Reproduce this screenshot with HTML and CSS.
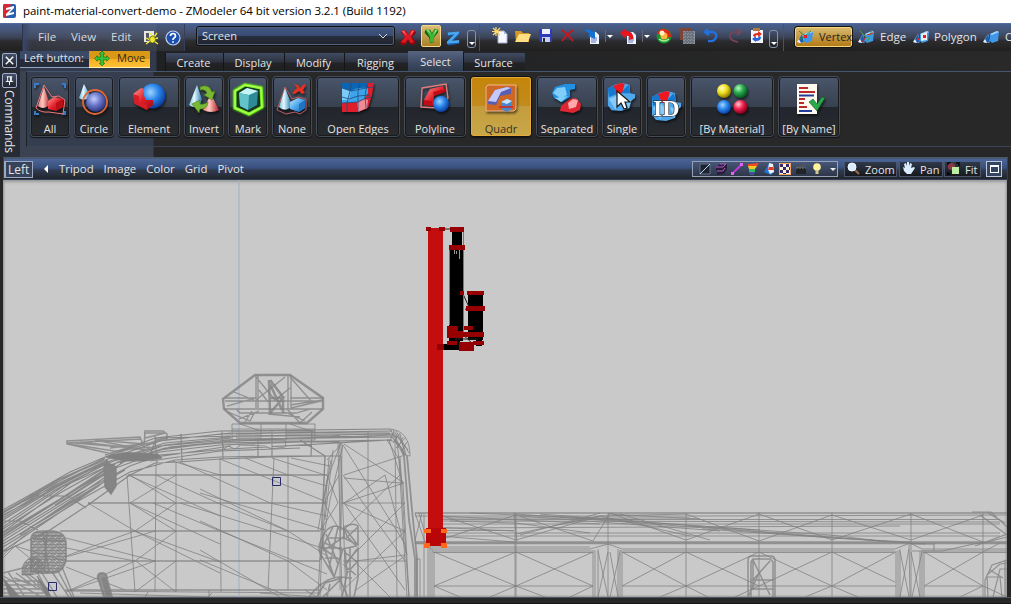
FILE: index.html
```html
<!DOCTYPE html>
<html lang="en">
<head>
<meta charset="utf-8">
<title>paint-material-convert-demo - ZModeler</title>
<link rel="stylesheet" href="styles.css">
</head>
<body>
<svg class="defs" width="0" height="0">
  <defs>
    <linearGradient id="red" x1="0" y1="0" x2="1" y2="1"><stop offset="0" stop-color="#ff9a94"/><stop offset=".5" stop-color="#e3202a"/><stop offset="1" stop-color="#9c0c14"/></linearGradient>
    <linearGradient id="blue" x1="0" y1="0" x2="1" y2="1"><stop offset="0" stop-color="#c4ebff"/><stop offset=".5" stop-color="#4ba6ea"/><stop offset="1" stop-color="#1462b4"/></linearGradient>
    <linearGradient id="coneb"><stop offset="0" stop-color="#6fb9d8"/><stop offset=".4" stop-color="#e6f8ff"/><stop offset="1" stop-color="#2f7fb0"/></linearGradient>
    <linearGradient id="coner"><stop offset="0" stop-color="#f08080"/><stop offset=".4" stop-color="#ffc8c0"/><stop offset="1" stop-color="#b01820"/></linearGradient>
    <radialGradient id="ballb" cx=".4" cy=".35" r=".65"><stop offset="0" stop-color="#9fd4ff"/><stop offset=".5" stop-color="#2a86ea"/><stop offset="1" stop-color="#0b3c9c"/></radialGradient>
    <radialGradient id="ballv" cx=".4" cy=".35" r=".65"><stop offset="0" stop-color="#c4ccff"/><stop offset=".5" stop-color="#6b78c8"/><stop offset="1" stop-color="#2c3580"/></radialGradient>
    <radialGradient id="bally" cx=".35" cy=".3" r=".7"><stop offset="0" stop-color="#ffffc0"/><stop offset=".5" stop-color="#f0e020"/><stop offset="1" stop-color="#8a7a00"/></radialGradient>
    <radialGradient id="ballg" cx=".35" cy=".3" r=".7"><stop offset="0" stop-color="#b8ffc0"/><stop offset=".5" stop-color="#28a84c"/><stop offset="1" stop-color="#065a20"/></radialGradient>
    <radialGradient id="ballr" cx=".35" cy=".3" r=".7"><stop offset="0" stop-color="#ffc8d0"/><stop offset=".5" stop-color="#f0204c"/><stop offset="1" stop-color="#800018"/></radialGradient>
    <pattern id="mesh" width="7" height="6" patternUnits="userSpaceOnUse"><path d="M0 0L7 6M7 0L0 6M0 1.500H7M0 4.500H7M2 0V6M5 0V6M0 3L4 6M3 0L7 3" stroke="#808080" stroke-width=".8" fill="none"/></pattern>
    <symbol id="shapes" viewBox="0 0 16 16"><path d="M0 13L5 5l2 8q-3 2-7 0z" fill="#e8f2fa"/><path d="M2 10l3-5 2 8-3 1z" fill="#1d5fae"/><path d="M7 5l7-3 2 1-1 9-6 2-2-2z" fill="#3f97e8"/><path d="M7 5l7-3 2 1-7 3z" fill="#a3d6ff"/></symbol>
    <symbol id="cluster" viewBox="0 0 32 32"><path d="M2 7l7-4 8-2 8 2 1 9 5 1v4l-4 3-2 8-9 3-10-1-4-5z" fill="#4fa9ec"/><path d="M2 7l7-4 2 10-8 3zM15 12l9-9 2 9z" fill="#1679cf"/><path d="M3 18l9-4 4 7-6 8zM20 17l7 3-3 8z" fill="#88cbfa"/><path d="M8 4l8-3 4 1-3 10-5 1z" fill="#f01820"/></symbol>
  </defs>
</svg>

<header class="title">
  <svg class="logo" viewBox="0 0 14 16"><rect x="0" y="1" width="13" height="14" rx="2" fill="#2c5fb2"/><path d="M0 3q0-2 2-2h6L3 15H2q-2 0-2-2z" fill="#d42a34"/><path d="M3 5l8-2v2L6 10l5-1v2l-8 2v-2l5-5-5 1z" fill="#fff"/></svg>
  <span>paint-material-convert-demo - ZModeler 64 bit version 3.2.1 (Build 1192)</span>
</header>

<nav class="toolbar">
  <div class="menu">
    <span class="m-file">File</span><span class="m-view">View</span><span class="m-edit">Edit</span>
    <svg class="i-spider" viewBox="0 0 16 16"><path d="M1 1h10v11H1z" fill="#e8e8e0"/><path d="M3 3h3v8H3z" fill="#53596a"/><path d="M7 3l2 3M14 3l-3 4M3 8l4 2M15 8l-4 1M3 14l4-3M15 14l-4-3M6 7l3 3M10 5v3" stroke="#f4f230" stroke-width="1.300"/><ellipse cx="9.500" cy="9.500" rx="3" ry="3.500" fill="#eee82a" stroke="#3c3c10" stroke-width=".6"/></svg>
    <svg class="i-help" viewBox="0 0 16 16"><circle cx="8" cy="8" r="7" fill="#1c4fb0" stroke="#c4d4f2" stroke-width="1.200"/><path d="M5.500 6q0-2.500 2.500-2.500T10.500 6Q10.500 7 9 8 8 8.500 8 10M8 11.300v1.500" fill="none" stroke="#fff" stroke-width="1.700"/></svg>
  </div>
  <div class="combo"><span>Screen</span><svg viewBox="0 0 10 6"><path d="M1 1l4 4 4-4" fill="none" stroke="#ddd"/></svg></div>
  <svg class="axis-x" viewBox="0 0 16 18"><path d="M1 4l5-1 2 4 3-5 4 1 1 2-4 4 3 4v3l-4 1-3-4-3 4H1l-1-3 5-5z" fill="#8e0710"/><path d="M1 3l4-1 3 5 3-5 4 0-4 7 3 5-3 1-3-4-3 4-4-1 4-5z" fill="#e01822"/><path d="M2 3l2 0 3 5zM12 3h2l-4 5z" fill="#f5787c"/></svg>
  <div class="axis-y"><svg viewBox="0 0 18 20"><path d="M2 5l1-2 5 0 2 4 3-5 4 1v3l-5 6v5l-4 1-1-6-5-5z" fill="#0f6a12"/><path d="M3 3h4l3 5 3-5h4l-5 8v6H8v-6z" fill="#40b838"/><path d="M4 3h2l3 5zM14 3h2l-4 6z" fill="#a5e79a"/></svg></div>
  <svg class="axis-z" viewBox="0 0 16 16"><path d="M2 3l12-2 1 3-8 8 7-1v3L2 16l-1-4 7-7-6 1z" fill="#1858a8"/><path d="M2 2l12-1v2l-8 8 8-1v3L1 14v-2l8-8-7 1z" fill="#49a7ed"/></svg>
  <span class="drop drop-a"></span>
  <div class="files">
    <svg class="f-new" viewBox="0 0 18 18"><path d="M6 4h6l3 3v9H6z" fill="#f5f8ff" stroke="#aac"/><path d="M12 4v3h3z" fill="#9fb5dc"/><path d="M4 0v9M0 4.500h9M1 1l7 7M8 1L1 8" stroke="#ffd868" stroke-width="1.200"/></svg>
    <svg class="f-open" viewBox="0 0 18 18"><path d="M1 4h6l2 2h6v9H2z" fill="#d49626"/><path d="M5 7h12l-3 8H1z" fill="#ffdf82"/></svg>
    <svg class="f-save" viewBox="0 0 16 16"><path d="M1 1h13v13H3l-2-2z" fill="#2e3ab6"/><path d="M4 1h8v5H4z" fill="#eef"/><path d="M4 9h8v5H4z" fill="#c7d0ee"/><path d="M5 10h2v4H5z" fill="#223"/></svg>
    <svg class="f-del" viewBox="0 0 16 16"><path d="M2 2q6 4 11 11M13 2Q6 7 2 13" stroke="#c21820" stroke-width="2" fill="none"/></svg>
    <svg class="f-imp" viewBox="0 0 18 18"><path d="M7 5h6l3 3v9H7z" fill="#eef3ff"/><path d="M8 11h6M8 13h6M8 15h5" stroke="#6179b4"/><path d="M1 3l5-1 4 3 2-2v9L5 9l2-2-3-2z" fill="#1672d2"/></svg>
    <span class="split"></span>
    <svg class="f-exp" viewBox="0 0 18 18"><path d="M7 5h6l3 3v9H7z" fill="#eef3ff"/><path d="M8 11h6M8 13h6M8 15h5" stroke="#6179b4"/><path d="M0 6l6-5v3q8 0 7 8l-4 1q1-5-3-4v3z" fill="#e8161c"/></svg>
    <span class="split"></span>
    <svg class="f-ball" viewBox="0 0 16 16"><circle cx="8" cy="8" r="7.500" fill="#189428"/><path d="M1 6Q3 0 9 1q6 1 6 8-3 1-5-1T1 6z" fill="#e0241c"/><circle cx="8" cy="8" r="3.500" fill="#ffb43c"/><circle cx="6" cy="5" r="2.500" fill="#fff2c8"/><path d="M3 11q5 4 10 0" stroke="#a8f0a0" fill="none" stroke-width="1.500"/></svg>
    <svg class="f-wall" viewBox="0 0 16 16"><path d="M0 0h12v12H0z" fill="#7d4536"/><path d="M3 3h12v13H3z" fill="#8a9099"/><path d="M3 5h12M3 8h12M3 11h12M3 14h12M6 3v13M9 3v13M12 3v13" stroke="#555b66" stroke-dasharray="2 1"/></svg>
    <svg class="f-undo" viewBox="0 0 16 16"><path d="M5 1L2 4l4 3M3 4h6q5 0 4 5t-8 4" fill="none" stroke="#2370de" stroke-width="2.400"/></svg>
    <svg class="f-redo" viewBox="0 0 16 16"><path d="M10 1l4 3-4 3M13 4H7Q2 5 3 9t8 5" fill="none" stroke="#7a4656" stroke-width="1.600"/></svg>
    <svg class="f-ref" viewBox="0 0 14 16"><path d="M1 2h12v13H1z" fill="#f4f5fb"/><path d="M3 0h7v3H3z" fill="#b57940"/><path d="M3 8q0-3 5-3V3l4 3-4 3V7Q5 7 5 9z" fill="#e22a20"/><path d="M11 9q0 4-5 4v1l-4-3 4-3v2q3 0 3-2z" fill="#2563d8"/></svg>
    <span class="drop"></span>
  </div>
  <div class="modes">
    <span class="vertex"><svg viewBox="0 0 16 16"><use href="#shapes"/><path d="M2 2l6 5M8 7l-6 4M8 7l6-5" stroke="#3a8c28"/><path d="M7 6h3v3H7z" fill="#e02020"/></svg>Vertex</span>
    <svg class="s-edge" viewBox="0 0 16 16"><use href="#shapes"/><path d="M2 2l7 7M14 1l-5 13" stroke="#4aa030"/><path d="M9 6l6-2M8 8l-4 5" stroke="#e02020"/></svg><span class="t-edge">Edge</span>
    <svg class="s-poly" viewBox="0 0 16 16"><use href="#shapes"/><path d="M8 5l6-2v8l-6 1z" fill="#e8ebf2"/><path d="M10 6h3v3h-3zM4 9h2v2H4z" fill="#e02020"/></svg><span class="t-poly">Polygon</span>
    <svg class="s-obj" viewBox="0 0 16 16"><use href="#shapes"/></svg><span class="t-obj">Object</span>
  </div>
</nav>

<main class="dock">
  <aside class="side">
    <span class="mini"><svg viewBox="0 0 14 14"><path d="M3 3l8 8M11 3l-8 8" stroke="#fff" stroke-width="1.500"/></svg></span>
    <span class="mini"><svg viewBox="0 0 14 14"><path d="M4 3h6M5 3v5M9 3v5M8 3v5M3 8h8M7 8v4" stroke="#fff" fill="none"/></svg></span>
    <span class="commands">Commands</span>
  </aside>
  <section class="panel">
    <div class="tabs">
      <span class="lb">Left button:</span>
      <span class="move"><svg viewBox="0 0 16 16"><path d="M8 0l3 3H9.500v3.500H13V5l3 3-3 3V9.500H9.500V13H11l-3 3-3-3h1.500V9.500H3V11L0 8l3-3v1.500h3.500V3H5z" fill="#35c43c" stroke="#14721a" stroke-width=".7"/></svg>Move</span>
      <span class="tab t-create">Create</span><span class="tab t-display">Display</span><span class="tab t-modify">Modify</span><span class="tab t-rigging">Rigging</span><span class="tab t-select">Select</span><span class="tab t-surface">Surface</span>
    </div>
    <div class="ribbon">
      <div class="btn w40"><svg viewBox="0 0 32 32"><path d="M1 5V1h4M28 1h3v4M1 28v3h4M28 31h3v-3" fill="none" stroke="#3a7acb" stroke-width="2"/><path d="M10 2L2 25q5 5 13 4l14 2 2-14-6-4-7 1z" fill="none" stroke="#ef7a78"/><path d="M10 4L4 23q5 4 10 0l2-2z" fill="url(#coner)"/><path d="M14 18l6-4 9 2v8l-7 4-8-2z" fill="url(#red)"/><path d="M14 18l8 2 7-4v8l-7 4v-8z" fill="#b80f18"/></svg><span>All</span></div>
      <div class="btn w40"><svg viewBox="0 0 32 32"><path d="M6 1L1 15q3 3 8 1l3-4z" fill="url(#coneb)"/><circle cx="18" cy="19" r="10" fill="url(#ballv)"/><circle cx="17" cy="19" r="12" fill="none" stroke="#e06838" stroke-width="1.800"/></svg><span>Circle</span></div>
      <div class="btn w62"><svg viewBox="0 0 32 32"><circle cx="20" cy="13" r="12.500" fill="url(#ballb)"/><path d="M0 11l8-6 3 1v7l2 4h7v5l-6 5-12-6z" fill="url(#red)"/><path d="M0 11l6 2v6l8 3v5L1 20z" fill="#d51e26"/></svg><span>Element</span></div>
      <div class="btn w40"><svg viewBox="0 0 32 32"><path d="M9 2L1 22q5 4 11 0l2-6z" fill="url(#coneb)"/><path d="M23 11l-8 16q8 4 16 0z" fill="url(#coner)"/><path d="M12 4q9-4 12 5l3-1-3 9-8-5 3-2q-2-4-7-3zM4 21l8-4v4q4 1 8-2-1 8-8 7l-1 4z" fill="#79b832" stroke="#407818" stroke-width=".6"/></svg><span>Invert</span></div>
      <div class="btn w40"><svg class="glow" viewBox="0 0 32 32"><path d="M3 8L13 2l16 3 1 19-13 7-14-6z" fill="#17351f" stroke="#78f51c" stroke-width="3"/><path d="M3 8L13 2l16 3 1 19-13 7-14-6z" fill="none" stroke="#c2ff70"/><path d="M7 10l8-5 11 3-1 14-9 5-8-4z" fill="#2e8a98"/><path d="M7 10l8-5 11 3-9 4z" fill="#c5f4f2"/><path d="M7 10l10 2-1 15-8-4z" fill="#62c3ca"/></svg><span>Mark</span></div>
      <div class="btn w40"><svg viewBox="0 0 32 32"><path d="M9 4L1 27l9 4 9-2 5 2 6-4V16l-8-2-6 2z" fill="none" stroke="#bd5e64"/><path d="M9 5L3 24q5 5 11 1l1-5z" fill="url(#coneb)"/><path d="M14 19l8-4 7 2v8l-6 4-9-3z" fill="url(#blue)"/><path d="M14 19l9 2 6-4v8l-6 4v-8z" fill="#2374c0"/><path d="M18 1l4 1 2 3 4-4 2 1-3 5 2 3-3 1-3-3-4 3-3-1 5-5z" fill="#e7301f"/></svg><span>None</span></div>
      <div class="btn w84"><svg viewBox="0 0 32 32"><path d="M0 0h27l-1 15-5 5H0z" fill="#3da4ea"/><path d="M0 0h27l-1 5q-11-1-17 3L0 5z" fill="#0965b6"/><path d="M26 0h6l-2 12-4 13-10 4H0v-9l15-1 7-3 4-6z" fill="#df1e2c"/><path d="M15 19l8-3 3 1-1 8-9 4zM0 7l8 1-2 8H0z" fill="#f28a91"/><path d="M0 5l9 3-2 9H0z" fill="#7bcaf8"/><path d="M0 5l9 3 15-3 7-1M0 14l7 2 9-3 12-1M0 20l16-1 8-4 5-1M9 0L8 8 5 20v9M18 0l-2 8v21M25 1l-2 12 1 12" fill="none" stroke="#1c4d82" stroke-width=".8"/></svg><span>Open Edges</span></div>
      <div class="btn w62"><svg viewBox="0 0 32 32"><path d="M3 5l24-4 2 14-10 10-17-1z" fill="none" stroke="#e27d7a" stroke-width="1.400"/><path d="M5 17L11 6l13-3 2 5-11 4-1 11-9-1z" fill="url(#red)"/><path d="M5 17l8 1 1 5-9-1zM14 9l12-3v3l-11 4z" fill="#c30b18"/><circle cx="22" cy="21" r="8" fill="url(#ballb)"/></svg><span>Polyline</span></div>
      <div class="btn w62 on"><svg viewBox="0 0 32 32"><path d="M1 4l2-2h28v24l-2 2H1z" fill="#ce6624" stroke="#f3bd91"/><path d="M3 18l7-11 12-3 4 1v6l-11 2-4 9-8-1z" fill="#595eb2"/><path d="M3 18l7-11 12-3 4 1-10 4-5 10z" fill="#c3c9fb"/><path d="M16 19l6-3 5 2v8l-5 3-6-3z" fill="#4a86ca"/><path d="M16 19l6-3 5 2-5 3z" fill="#c5e4ff"/><path d="M14 24h14" stroke="#e02014" stroke-width="1.500"/></svg><span>Quadr</span></div>
      <div class="btn w62"><svg viewBox="0 0 32 32"><path d="M1 10l3-6 10-3 10 0v5l-5 1v7l-8 5-8-4z" fill="#2391e2"/><path d="M2 10l4-5 8-1 2 8-7 3zM4 15l6-1 7-1-7 6z" fill="#82cefa"/><path d="M9 28l1-5 9-7 6-1 5 6-1 6-7 3z" fill="#de2733"/><path d="M17 20l5-4 5 1-2 7-7 2z" fill="#ffa9aa"/></svg><span>Separated</span></div>
      <div class="btn w40"><svg viewBox="0 0 32 32"><use href="#cluster" y="-1" width="30" height="30"/><path d="M11 8v16l4-4 3 6 3-1-2-6h5z" fill="#fff" stroke="#181818" stroke-width="1.200"/></svg><span>Single</span></div>
      <div class="btn w40 id"><svg viewBox="0 0 32 32"><use href="#cluster" width="32" height="32"/><text x="3" y="26" class="idtext">ID</text></svg></div>
      <div class="btn w84"><svg viewBox="0 0 32 32"><circle cx="8" cy="8" r="7" fill="url(#bally)"/><circle cx="24.500" cy="8" r="7" fill="url(#ballg)"/><circle cx="8" cy="24" r="7" fill="url(#ballb)"/><circle cx="24.500" cy="24" r="7" fill="url(#ballr)"/></svg><span>[By Material]</span></div>
      <div class="btn w62"><svg viewBox="0 0 32 32"><path d="M4 1h20v30H4z" fill="#fff8ee"/><path d="M6 5h9M6 9h16M6 16h6M6 20h5M6 24h8" stroke="#b92a2a" stroke-width="2"/><path d="M6 12.500h15M6 28h13" stroke="#233e9a" stroke-width="2"/><path d="M16 19l4-3 4 5 5-7 3 1-8 13z" fill="#2aa84a" stroke="#0c5c20" stroke-width=".6"/></svg><span>[By Name]</span></div>
    </div>
  </section>
</main>

<nav class="viewbar">
  <span class="viewname">Left</span>
  <div class="viewmenu"><svg viewBox="0 0 6 10"><path d="M5 1v8L1 5z" fill="#fff"/></svg><span>Tripod</span><span>Image</span><span>Color</span><span>Grid</span><span>Pivot</span></div>
  <div class="display">
    <svg viewBox="0 0 12 12"><path d="M1 1h10v10H1z" fill="#1d2430" stroke="#66718a"/><path d="M1 11L11 1" stroke="#b8d8ee"/></svg>
    <svg viewBox="0 0 12 12"><path d="M1 4l4-3h7v5L9 11l-7 1V8H1z" fill="#281c38"/><path d="M1 4h7l3-3M2 8h6l2-3M5 1h6" stroke="#ac60c2" fill="none"/></svg>
    <svg viewBox="0 0 12 12"><path d="M2 10l8-8" stroke="#bd38da" stroke-width="2"/><path d="M0 9h3v3H0zM9 0h3v3H9z" fill="#dd68ee"/></svg>
    <svg viewBox="0 0 12 12"><path d="M1 1l11-1-2 3H1z" fill="#f24824"/><path d="M1 3h9L8 6H2z" fill="#f3c724"/><path d="M2 6h6v3H2z" fill="#34b967"/><path d="M2 9h6l-1 3H3z" fill="#454d9c"/></svg>
    <svg viewBox="0 0 12 12"><path d="M1 9l5-8h4l1 8-3 3z" fill="#2275d8"/><path d="M6 0l4 1 1 8-4 2-2-4z" fill="#e9f2fc"/><path d="M6 4h4l1 3H5z" fill="#e13827"/></svg>
    <svg viewBox="0 0 12 12"><path d="M0 0h12v12H0z" fill="#fff0dc"/><path d="M1 1h3v3H1zM7 1h3v3H7zM4 4h3v3H4zM1 7h3v3H1zM7 7h3v3H7zM4 10h3v2H4zM10 4h2v3h-2z" fill="#342b68"/><path d="M.5.500h11v11H.5z" fill="none" stroke="#f3a467"/></svg>
    <svg viewBox="0 0 12 12"><path d="M1 5h10v6H1z" fill="#202328"/><path d="M1 4l9-3 1 2-9 2z" fill="#555"/><path d="M1 5h10" stroke="#888" stroke-dasharray="2 1"/></svg>
    <svg viewBox="0 0 12 12"><circle cx="6" cy="4" r="3.800" fill="#fff49a"/><path d="M4.500 7h3v4h-3z" fill="#d3c98d"/></svg>
    <svg viewBox="0 0 12 12"><path d="M3 5h6L6 8z" fill="#eee"/></svg>
  </div>
  <div class="nav">
    <span class="n-zoom"><svg viewBox="0 0 13 13"><path d="M8 8l4 4" stroke="#9c6a48" stroke-width="2"/><circle cx="5" cy="5" r="4" fill="#dcecff" stroke="#f4f8ff"/></svg>Zoom</span>
    <span class="n-pan"><svg viewBox="0 0 13 13"><path d="M1 5l2 1-1-4 2-1 1 3V0h2v4l1-3 2 1-1 4 3-1 1 1-4 6H5L2 9z" fill="#dcecff"/></svg>Pan</span>
    <span class="n-fit"><svg viewBox="0 0 13 13"><path d="M1 3V1h3M9 1h3v3M1 10v2h2" fill="none" stroke="#050505" stroke-width="1.500"/><circle cx="4.500" cy="4.500" r="3.500" fill="#8d3845"/><path d="M5 5h7v7H5z" fill="#bdeea4"/></svg>Fit</span>
  </div>
  <span class="maxi"><i></i></span>
</nav>

<section class="viewport">
<svg class="scene" viewBox="3 180 1004 417">
  <path d="M239 180V597" stroke="#9dafc5"/>
  <g class="wire">
    <!-- hull and roof rails -->
    <path class="rails" d="M3 510L28 496 70 472 105 457 155 438 220 431 390 429M3 513L70 475 105 460 160 441 220 434 392 431M3 518L60 484 110 461 165 443 240 436 395 434M3 524L55 490 105 464 160 446 240 439 396 437M3 529L60 493 110 465 165 448 220 443 392 440M3 535L65 496 110 470 160 452 220 445 300 442 340 442M3 541L75 496 130 466 160 455 230 449 390 440M3 547L80 500 130 472 175 460 220 457 285 456 340 456M3 552L50 530 88 505 130 475 155 463 178 462 220 459 270 457 325 456M3 532L75 480 110 462M3 536L85 484 118 462M3 515L90 470M3 551L100 485M10 540L90 490 125 470M3 497H3M28 496H68L86 508M3 521H20L38 530M155 436L157 463M181 434L182 461M222 431L223 459M258 440V456M272 431V458M300 440L325 456M312 430L311 456M3 512L60 479 104 459M3 516L55 485 108 460M3 520L70 479M3 527L62 487 106 467M3 533L60 499 104 470M3 538L60 503 104 475M3 544L60 510 104 482M20 535L104 478M28 497L105 458M12 507L108 461M55 505L130 458M120 463L160 450 220 442 340 436M130 458L165 445 231 438M140 457L170 447 231 441M117 462L170 455 231 446M165 440L231 433M160 438L231 436M315 433H390M315 436L393 437M315 438L393 435M150 461L220 451 300 448"/>
    <path d="M3 558L15 546 65 561M15 546L48 573M3 555L30 530"/>
    <!-- cab windows -->
    <path d="M128 475H327M88 503H327M60 531H320M66 561H320M65 590H320" stroke-width="1.300"/>
    <path d="M127 475L135 592M156 463L155 592M176 462V592M220 458L221 592M274 458L268 590M288 456V590M128 475L220 516M156 475L220 504M130 503L220 544M153 503L220 531M88 503L135 531 220 573M134 531L220 562M66 538L155 561M66 548L135 561M66 567L125 590M135 531L66 556M155 531L66 557M135 561L70 590M155 561L66 592M130 475L176 503 135 531M176 475L130 503 176 531 135 561M176 561L135 592M136 561L176 592M172 461L220 475M180 462L270 503 327 516M220 459L327 502M220 475L290 475 327 486M200 489L288 531 327 556M220 504L288 531M200 521L288 561 327 590M220 531L327 574M200 550L280 597M200 560L290 597M200 493L325 530M180 503L270 531 325 549M245 458L288 475M272 458L325 475M291 458L330 466"/>
    <!-- pillar and side door -->
    <path d="M325 456L318 597M329 458L321 560M340 443V590M341 443L327 480 318 530M343 445L330 500 320 560M333 450L325 520M344 444L404 483 343 503 405 531M344 475L405 455M344 478L400 483M343 445L405 544M343 475L405 561M344 503L385 475 407 555M344 503L405 590M344 531L404 531M343 561H406M343 531L400 475M343 565L405 503M343 590L405 531M368 431V597M395 440L397 597M341 503H405M355 561L405 555M357 564L390 597M356 590L405 556M341 456L346 597M338 443L342 597M342 443L341 531M327 460L337 449 341 443M325 456L320 597M331 460L324 500M327 475L338 503 320 531M339 475L324 503 340 531"/>
    <path d="M390 429Q410 431 410 456L404 455Q402 441 387 440M393 430L408 450M396 431L409 453M400 434L405 455M403 437L398 448M407 442L401 452M390 429L405 455M392 434Q403 438 406 455M391 437Q400 442 403 455M394 431L390 441M400 433L393 443M405 438L396 448M387 440L399 459 407 597M389 440L403 484 409 597M400 457L406 555 409 597M396 434L402 484M393 438L404 455"/>
    <path d="M404 456L409 520 415 558V597M407 456L413 520 417 558V597" stroke-width="1.800"/>
    <!-- cargo bed -->
    <path d="M415 513H1007M415 542H1007M415 543.500H1007" stroke-width="1.500"/>
    <path d="M415 516L700 516 1007 515M430 518H690M430 521L1000 522M430 524H1000M440 528L900 526M430 533H1000M430 536H1000M430 549H590L608 544 622 549H895L910 543 922 549H1007M432 551H592M620 551H895M923 551H1007M433 552.500H593M622 552.500H894M923 552.500H1007M424 514V597M428 545V597M430 547V597M432 549V597M434 552V597M415 513L425 542M419 513L424 530M422 513L415 540M416 559H420V597M417 558V597M514 513L517 541M516 513V597M515 513V597M593 550V597M595 550V597M598 549V597M608 513V597M618 549V597M620 550V597M622 552V597M686 513V597M759 512V597M832 513V597M896 551V597M898 550V597M900 549V597M909 543L910 597M911 513V597M920 551V597M922 550V597M924 552V597M983 513V597M434 586H593M622 586H896M924 586H983"/>
    <path d="M434 552L516 586 593 552M434 586L516 552 593 586M434 586L460 597M593 586L570 597M516 586L545 597M516 586L490 597M622 586L686 552 759 586 832 552 895 582M622 552L686 586 759 552 832 586 896 552M686 586L660 597M686 586L708 597M759 586L735 597M832 586L805 597M832 586L858 597M924 552L983 586 1007 597M924 586L983 552 1000 543M983 586L960 597M598 551L608 597M608 552L598 597M610 552L618 597M620 552L610 597M900 551L909 597M909 549L900 597M911 552L920 597M922 552L912 597M440 540L516 515 593 541 610 513 686 540 759 514 832 540 911 514 983 542M440 515L516 540 600 516 686 514 759 541 832 515 911 540 983 515M516 514L760 532 832 538 910 542M540 514L700 526 830 535 880 541M608 514L700 519M690 526L895 542M702 529L925 544M470 513L640 520M440 516L600 524M450 521L516 523 590 533M430 527L514 531M516 534L600 516 690 536M600 513L520 535M620 514L710 540M440 536L514 542M520 516L720 531M560 517L760 530M430 519.500H1000M430 530.500H514M430 547H590"/>
    <!-- fuel cap hatch -->
    <path d="M748 597V560Q748 556 752 556H771Q775 556 775 561V597M751 597V562L753 559H770L773 562V597M753 560L770 595M770 561L753 580M750 580H774M750 589H774M759 573L748 597M753 560V590" stroke-width="1.500"/>
    <path d="M972 512H991L1007 527M980 515L1007 535M988 513L1005 523M975 546L1007 534M983 543L1007 537M911 544H934V551H912M932 551H942L983 542M985 597V580L992 565 1007 560M988 597L987 575 1000 564 1007 563M993 597L1000 569H1007M1002 597L1000 577H987M1005 560V597M990 570L1003 578" stroke-width="1.200"/>
    <!-- mirrors and seat backs -->
    <path d="M320 543Q325 527 335 526Q344 526 347 536L356 546 343 549 334 577 320 553Q318 548 320 543zM322 542L342 550M323 551L345 536M326 534L338 564M333 527L322 548 340 560M338 527L329 568M323 544L334 577M327 538H345M321 548H342M325 558H337M344 527Q353 522 358 526V545L344 538V527zM344 527L357 544M358 527L346 538M358 547V578L354 597M345 550L347 574 342 597M350 547V597M346 553L357 562 346 574M357 549L345 566 356 575M309 597Q323 578 340 577L352 578M317 597L325 583 342 578M323 597L340 580 348 597M330 584L327 597" stroke-width="1.600"/>
    <!-- beacon -->
    <path d="M223 399L255 375H290L323 398V409L307 423H240L224 409z" stroke-width="2.400"/>
    <path d="M224 409H322M236 409L240 413H296L310 409M256 375V408M258 375V408M288 375V409M291 375V409M225 398H256M290 398H323M225 401H322M227 406L255 398M234 392L254 400M256 377L275 400 290 388M256 400L285 377M259 390L268 402M290 377L312 402M290 405L323 400M291 408L321 401M228 412L250 421 255 412M239 419L259 411M287 409L300 423 312 412M305 421L285 412M245 422L252 411M268 414L300 417" stroke-width="1.300"/>
    <path d="M269 380L270 413M270 380L283 397V413M270 384L282 410M269 398H283L270 413" stroke-width="2.500"/>
    <path d="M232 424H315V440H232zM232 429H315M232 432H315M232 436H315M261 424V440M286 424V440M286 431H315M286 433H315M286 435H315M286 438H315M236 434H260M236 438H260M240 424L261 431M290 424L311 431M220 440H285L286 447M222 441L224 449 228 446 235 449 240 445 265 446 271 449 285 447"/>
    <!-- roof wing and lamp -->
    <path d="M67 441L140 437L144 447L145 431H163L167 434V439H156L150 455H117L67 444zM67 443L141 439M80 442L141 449M100 441L145 450M70 444L120 452 163 439M105 455L143 443M75 443L133 448M144 433H166M145 438L165 433M146 445L167 438M95 440L145 444M110 448L150 443M115 451L150 447" stroke-width="1.500"/>
    <path d="M106 457Q121 451 137 453L158 454 162 458 145 461H124z" fill="#808080"/>
    <path d="M104 467Q106 460 116 467V486L111 494 105 487z" fill="#858585" stroke-width="1.500"/>
    <path d="M31 571V540Q31 531 42 531H53Q66 532 66 544V560Q63 573 52 573Q37 574 31 571zM34 536H63M33 539L65 541M43 531L49 573M47 532L44 573M31 571L53 573" fill="url(#mesh)" stroke-width="1.700"/>
    <path d="M22 572Q22 560 33 557Q44 558 43 568Q40 576 22 575zM22 572L40 561M26 563L42 573M33 557L30 575" fill="url(#mesh)"/>
    <path d="M3 573L27 567M3 576L42 597M8 572L25 597M16 573L39 590M24 573L49 597M27 573L51 591M37 572L51 597M42 573L57 597M52 572L69 597M57 569L72 597M62 567L74 597M3 581H42M3 585H44M3 589H45M3 593H48M3 596H48M14 578L30 584M36 580L48 597" stroke-width="1.400"/>
    <path d="M37 576L47 597H50L48 590zM3 578L20 597H10z" fill="#808080"/>
    <path d="M98 578Q97 573 102 573Q107 573 107 579L112 597H104zM102 578L108 597M104 577L110 597" fill="#929292" stroke-width="2"/>
    <path d="M70 591L320 593M80 593L210 597M148 592L145 597M212 593L208 597M260 593L317 597M209 590V597M305 590L317 597"/>
  </g>
  <path d="M272.500 477.500h8v8h-8zM48.500 582.500h8v8h-8z" fill="none" stroke="#272c69"/>
  <!-- exhaust stack -->
  <path d="M443 344h24v6h-24zM452 230h10v16h-10zM450 248h13v78h-13zM468 293h15v47h-15zM449 325h14v16h-14zM452 337h8v9h-8zM476 337h6v9h-6z" fill="#000"/>
  <path d="M443 229h19M463 294l6 13M460 332l13 12M455 339h23M465 309l5 2" stroke="#222" fill="none"/>
  <path d="M449.500 250V325M463.500 231v106" stroke="#777"/>
  <path d="M454.500 250v4M456.500 251v3M459.500 250v9" stroke="#999"/>
  <path d="M428 228h15v312h-15z" fill="#c40d0e"/>
  <path d="M426 528h20v18h-20z" fill="#b90508"/>
  <path d="M426 227h5v4h-5zM439 227h6v4h-6zM450 227h14v5h-14zM449 245h16v5h-16zM460 291h4v4h-4zM467 291h17v4h-17zM466 306h19v5h-19zM447 326h11v5h-11zM464 326h9v4h-9zM447 331h16v7h-16zM463 332h21v5h-21zM447 341h10v4h-10zM473 341h11v4h-11zM459 342h15v9h-15zM437 344h7v6h-7z" fill="#970002"/>
  <path d="M424 529h7v4h-7zM441 529h6v4h-6zM424 543h6v5h-6zM441 543h6v5h-6z" fill="#ff681a"/>
</svg>
</section>
<footer class="foot"></footer>
</body>
</html>
```
FILE: styles.css
```css
* { box-sizing: border-box; }
body { margin: 0; width: 1011px; height: 604px; overflow: hidden; display: flex; flex-direction: column; background: #272727; color: #e4e4e4; font: 11px/16px "Open Sans", "Noto Sans", sans-serif; white-space: nowrap; }
svg { display: block; flex: none; }
span { flex: none; }
.defs { position: absolute; }

.title { flex: none; height: 23px; background: #fff; color: #000; display: flex; align-items: center; padding: 0 0 1px 3px; font-size: 11.5px; }
.title span { letter-spacing: -.05px; }
.logo { width: 14px; height: 16px; margin-right: 6px; }

.toolbar { flex: none; height: 28px; overflow: hidden; display: flex; align-items: flex-start; background: linear-gradient(#46608f 0, #465474 7px, #3a4152 14px, #2c2c2f 17px, #252525 23px, #202020 27px); border-top: 1px solid #536c99; }
.toolbar > * { flex: none; }
.menu { display: flex; width: 163px; height: 27px; margin-left: 22px; align-items: center; background: linear-gradient(90deg, #39486c 0, #50597155 8px, #59617577 133px, #48506455 134px); border-left: 1px solid #2b3449; border-right: 1px solid #333f5d; }
.menu span { font-size: 11.5px; height: 18px; color: #d4d7de; }
.m-file { margin-left: 15px; width: 33px; }
.m-view { width: 40px; }
.m-edit { width: 32px; }
.i-spider { width: 16px; height: 16px; margin-right: 6px; }
.i-help { width: 16px; height: 16px; }
.combo { width: 199px; height: 20px; margin: 2px 0 0 11px; padding: 0 6px 0 5px; border: 1px solid #111; outline: 1px solid #51617f; outline-offset: -2px; border-radius: 3px; background: linear-gradient(#435985, #374a70 50%, #262e3f 51%, #202329); display: flex; align-items: center; justify-content: space-between; }
.combo svg { width: 10px; height: 6px; }
.axis-x { width: 16px; height: 18px; margin: 4px 0 0 5px; }
.axis-y { width: 20px; height: 22px; margin: 1px 0 0 5px; padding: 1px; background: linear-gradient(#d9bd72, #a98127); border: 1px solid #f5d88a; border-radius: 2px; }
.axis-y svg { width: 16px; height: 18px; }
.axis-z { width: 15px; height: 16px; margin: 6px 0 0 5px; }
.drop { width: 9px; height: 18px; border: 1px solid #8993a8; border-radius: 3px; background: linear-gradient(#44516b, #202226); display: flex; align-items: flex-end; justify-content: center; padding-bottom: 2px; }
.drop::after, .split::after { content: ""; border: 3px solid transparent; border-top-color: #fff; border-bottom: 0; }
.drop-a { margin: 6px 0 0 6px; }
.files { height: 27px; width: 305px; margin-left: 3px; border-left: 1px solid #405276; border-right: 1px solid #405276; display: flex; align-items: center; padding: 0 0 3px 12px; }
.f-new, .f-open, .f-imp, .f-exp { width: 18px; height: 18px; }
.f-open { margin-left: 4px; }
.f-save, .f-del, .f-ball, .f-wall, .f-undo, .f-redo { width: 16px; height: 16px; }
.f-save, .f-del { margin-left: 6px; }
.f-imp { margin-left: 7px; }
.f-exp { margin-left: 6px; }
.split { width: 9px; height: 12px; border-left: 1px solid #667; display: flex; align-items: center; justify-content: center; margin-left: 4px; }
.f-ball { margin-left: 5px; }
.f-wall { margin-left: 8px; }
.f-undo { margin-left: 7px; }
.f-redo { margin-left: 8px; }
.f-ref { width: 14px; height: 16px; margin-left: 7px; }
.files .drop { margin: 6px 0 0 5px; }
.modes { display: flex; height: 25px; align-items: center; margin-left: 11px; font-size: 11.5px; }
.modes svg { width: 16px; height: 16px; }
.vertex { width: 57px; height: 20px; display: flex; align-items: center; gap: 6px; padding: 0 1px; font-size: 11px; color: #262421; background: linear-gradient(#d7b96e, #c09238 60%, #b47c19); border: 1px solid #f6d681; outline: 1px solid #151515; border-radius: 2px; }
.s-edge { margin: 0 6px 0 6px; }
.t-edge { width: 28px; }
.s-poly { margin: 0 5px; }
.t-poly { width: 46px; }
.s-obj { margin: 0 6px 0 3px; }

.dock { flex: none; height: 106px; display: flex; background: linear-gradient(90deg, #3b4251 153px, #272727 154px); }
.side { width: 20px; padding: 2px 0 0 2px; background: #272b34; }
.mini { display: block; width: 15px; height: 15px; margin-bottom: 5px; border: 1px solid #a2aec8; border-radius: 2px; background: linear-gradient(#44506a, #20242b); }
.mini svg { width: 13px; height: 13px; }
.commands { display: block; writing-mode: vertical-rl; width: 15px; font-size: 12px; line-height: 15px; letter-spacing: -.15px; margin-top: -3px; }
.panel { flex: 1; display: flex; flex-direction: column; }
.tabs { height: 20px; display: flex; align-items: flex-start; background: linear-gradient(90deg, #31394b 136px, #202123 137px, #292929); }
.lb { width: 69px; height: 17px; padding-left: 4px; line-height: 14px; background: linear-gradient(#394966 50%, #252b38 50%); border-bottom: 1px solid #91a4c4; }
.move { width: 61px; height: 17px; display: flex; gap: 7px; padding-left: 5px; line-height: 14px; color: #302a12; background: linear-gradient(#d99817, #dc9715 50%, #f5af25 51%, #ffc233); border-bottom: 1px solid #fff0b0; }
.move svg { width: 16px; height: 15px; }
.tab { height: 18px; margin-top: 2px; padding-right: 2px; text-align: center; line-height: 19px; border-left: 1px solid #151515; background: linear-gradient(#404c64, #2d323d 9px, #222327 10px, #202020); }
.t-create { margin-left: 15px; width: 58px; }
.t-display { width: 61px; }
.t-modify { width: 60px; }
.t-rigging { width: 64px; }
.t-select { width: 55px; height: 20px; margin-top: 0; padding: 0; line-height: 22px; background: linear-gradient(#576581, #3e4a62 12px, #323d50); border: 0; }
.t-surface { width: 62px; }
.ribbon { width: 985px; height: 76px; margin-left: 6px; padding: 4px 0 0 3px; display: flex; gap: 4px; align-items: flex-start; border-top: 1px solid #465570; border-left: 1px solid #1d2229; border-bottom: 1px solid #394557; background: linear-gradient(90deg, #353e4f 126px, #282828 127px); }
.btn { flex: none; height: 61px; border: 1px solid #444c5a; border-radius: 4px; outline: 1px solid #181a1e; outline-offset: -2px; display: flex; flex-direction: column; align-items: center; padding-top: 6px; background: linear-gradient(#49556b, #38414e 50%, #22262d 51%, #292b2f); box-shadow: 0 1px 1px #151515; }
.btn svg { width: 32px; height: 32px; filter: drop-shadow(1px 2px 1px #0008); }
.btn svg.glow { overflow: visible; filter: drop-shadow(0 0 1px #6f0); }
.btn span { margin-top: 6px; }
.w40 { width: 40px; }
.w62 { width: 62px; }
.w84 { width: 84px; }
.btn.on { color: #363024; border-color: #111; outline-color: #e4ab38; background: linear-gradient(#c5850a, #c18b1c 48%, #c49c3d 50%, #c8a849); }
.btn.id { padding-top: 13px; }
.idtext { font: bold 24px "Liberation Serif", serif; fill: #fff; stroke: #222; stroke-width: 1.2px; paint-order: stroke; }

.viewbar { flex: none; height: 23px; margin: 0 3px; border: 1px solid #32405b; border-top: 2px solid #4b5870; display: flex; align-items: center; background: linear-gradient(#4b6596, #38507d 9px, #303b50 11px, #22252a); font-size: 12px; }
.viewname { width: 29px; height: 17px; line-height: 15px; padding-left: 2px; border: 1px solid #9ba9c3; border-left-width: 2px; background: #37435b; }
.viewmenu { width: 655px; margin-left: 4px; display: flex; align-items: center; gap: 10px; font-size: 11.4px; }
.viewmenu svg { width: 6px; height: 10px; margin-left: 6px; }
.display { width: 146px; height: 16px; border: 1px solid #95a1b5; background: linear-gradient(#465678, #2e3648); display: flex; align-items: center; padding-left: 6px; gap: 4px; }
.display svg { width: 12px; height: 12px; }
.nav { width: 141px; display: flex; margin-left: 6px; font-size: 11px; }
.nav span { height: 15px; line-height: 15px; display: flex; border: 1px solid #4b566c; border-top: 0; gap: 5px; padding-left: 2px; background: linear-gradient(#303949, #16191d); }
.nav svg { width: 13px; height: 13px; }
.n-zoom { width: 53px; }
.n-pan { width: 44px; margin-left: 2px; }
.n-fit { width: 37px; margin-left: 1px; }
.maxi { width: 16px; height: 16px; margin-left: 1px; border: 1px solid #bac8df; background: #36455f; display: flex; align-items: center; justify-content: center; }
.maxi i { width: 9px; height: 8px; border: 1px solid #fff; border-top-width: 2px; }

.viewport { flex: none; height: 417px; margin: 0 4px 0 3px; background: #c9c9c9; box-shadow: inset 0 2px 3px #999, inset 1px 0 2px #999, inset -1px -1px 2px #999; }
.scene { width: 1004px; height: 417px; }
.wire { fill: none; stroke: #808080; stroke-width: 1; stroke-opacity: .78; }
.rails { stroke-width: 1.15; stroke-opacity: .9; }
.foot { flex: 1; border-top: 1px solid #4b5664; border-bottom: 1px solid #151515; background: #272727; }
```
